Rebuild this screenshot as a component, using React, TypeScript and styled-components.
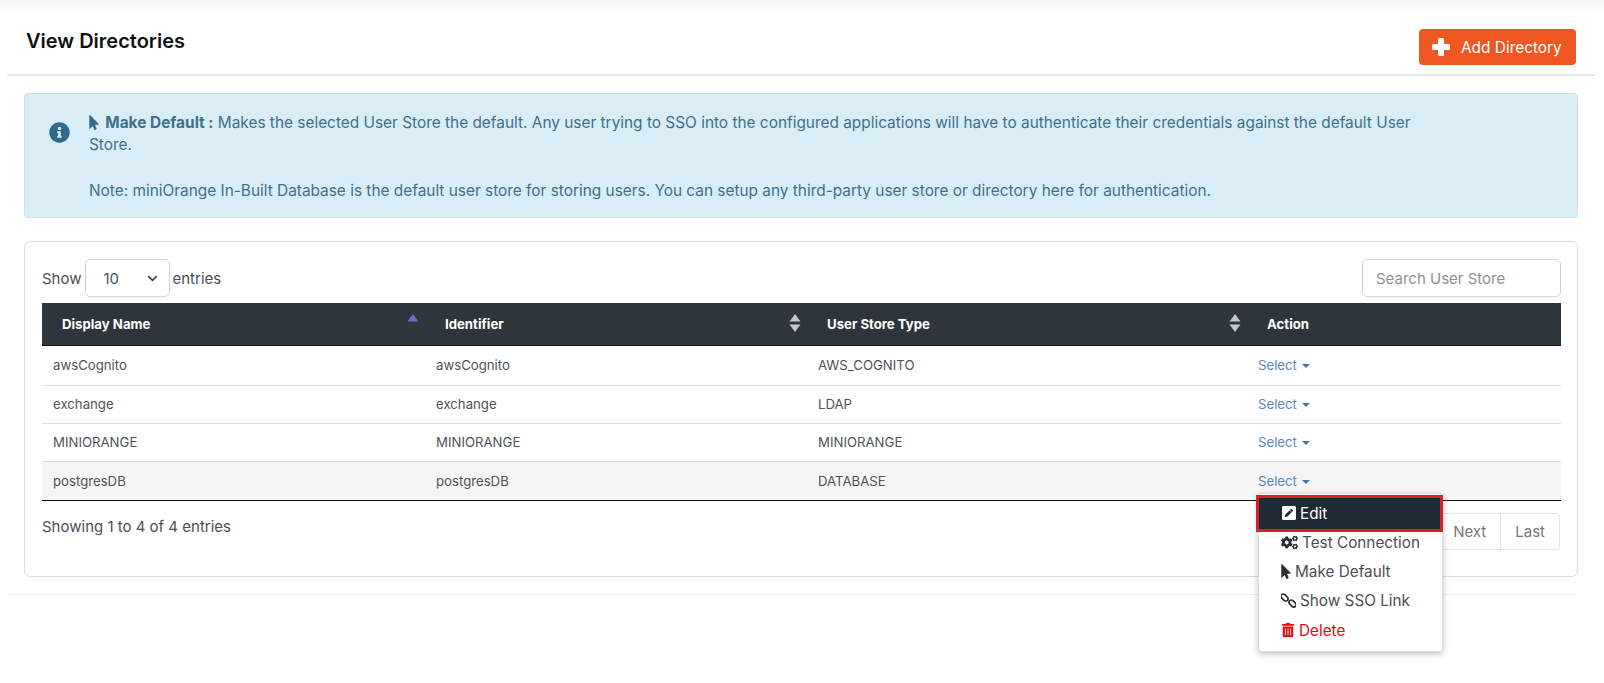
import styled, { createGlobalStyle } from "styled-components";
import { FaCogs, FaInfoCircle, FaMousePointer, FaPenSquare, FaTrashAlt } from "react-icons/fa";
import { ChevronDown } from "lucide-react";

const FONT = `Inter, "Liberation Sans", sans-serif`;

const rows = [
  { name: "awsCognito", type: "AWS_COGNITO", height: 40 },
  { name: "exchange", type: "LDAP", height: 38 },
  { name: "MINIORANGE", type: "MINIORANGE", height: 38 },
  { name: "postgresDB", type: "DATABASE", height: 39 },
];

const columns = [
  { label: "Display Name", width: 383, sort: "asc" },
  { label: "Identifier", width: 382, sort: "both" },
  { label: "User Store Type", width: 440, sort: "both" },
  { label: "Action", width: 314, sort: "none" },
];

const App = () => {
  return (
    <Page>
      <GlobalStyle />
      <Header>
        <Title>View Directories</Title>
        <AddButton>
          <svg width="18" height="18" viewBox="0 0 18 18">
            <path d="M6 1.5Q6 0 7.5 0h3Q12 0 12 1.5V6h4.5Q18 6 18 7.5v3q0 1.5-1.5 1.5H12v4.5q0 1.5-1.5 1.5h-3Q6 18 6 16.5V12H1.5Q0 12 0 10.5v-3Q0 6 1.5 6H6z" fill="#fff" />
          </svg>
          Add Directory
        </AddButton>
      </Header>

      <Content>
        <Alert>
          <AlertIcon>
            <FaInfoCircle size={21} />
          </AlertIcon>
          <AlertBody>
            <p>
              <AlertPointer size={15} /> <strong>Make Default :</strong> Makes the selected User
              Store the default. Any user trying to SSO into the configured applications will have
              to authenticate their credentials against the default User Store.
            </p>
            <p>
              Note: miniOrange In-Built Database is the default user store for storing users. You
              can setup any third-party user store or directory here for authentication.
            </p>
          </AlertBody>
        </Alert>

        <Card>
          <Toolbar>
            <ShowLabel>
              Show
              <SelectWrap>
                <PageSize defaultValue="10">
                  <option>10</option>
                  <option>25</option>
                  <option>50</option>
                </PageSize>
                <SelectChevron>
                  <ChevronDown size={15} strokeWidth={2.6} />
                </SelectChevron>
              </SelectWrap>
              entries
            </ShowLabel>
            <Search placeholder="Search User Store" />
          </Toolbar>

          <Table>
            <colgroup>
              {columns.map((c) => (
                <col key={c.label} style={{ width: c.width }} />
              ))}
            </colgroup>
            <thead>
              <tr>
                {columns.map((c) => (
                  <Th key={c.label}>
                    {c.label}
                    {c.sort !== "none" && (
                      <SortIcon>
                        <svg width="12" height="18" viewBox="0 0 12 18">
                          <path d="M6 0l5.5 7.5H.5z" fill={c.sort === "asc" ? "#7269c9" : "#c4c6c9"} />
                          {c.sort === "both" && <path d="M6 18L.5 10.5h11z" fill="#c4c6c9" />}
                        </svg>
                      </SortIcon>
                    )}
                  </Th>
                ))}
              </tr>
            </thead>
            <tbody>
              {rows.map((row, i) => (
                <Row key={row.name} $height={row.height} $last={i === rows.length - 1}>
                  <td>{row.name}</td>
                  <td>{row.name}</td>
                  <td>{row.type}</td>
                  <td>
                    <SelectLink>
                      Select <Caret />
                      {i === rows.length - 1 && (
                        <Menu>
                          <ActiveItem>
                            <FaPenSquare size={16} />
                            Edit
                          </ActiveItem>
                          <MenuItem>
                            <FaCogs size={17} />
                            Test Connection
                          </MenuItem>
                          <MenuItem>
                            <PointerIcon size={15} />
                            Make Default
                          </MenuItem>
                          <MenuItem>
                            <svg width="15" height="15" viewBox="0 0 15 15" fill="none" stroke="#2b2f33" strokeWidth="1.7">
                              <rect x="-0.5" y="2.2" width="8" height="4.6" rx="2.3" transform="rotate(45 3.5 4.5)" />
                              <rect x="7.5" y="8.2" width="8" height="4.6" rx="2.3" transform="rotate(45 11.5 10.5)" />
                            </svg>
                            Show SSO Link
                          </MenuItem>
                          <MenuItem $danger>
                            <FaTrashAlt size={14} />
                            Delete
                          </MenuItem>
                        </Menu>
                      )}
                    </SelectLink>
                  </td>
                </Row>
              ))}
            </tbody>
          </Table>

          <Footer>
            <span>Showing 1 to 4 of 4 entries</span>
            <Pagination>
              <PageButton>Next</PageButton>
              <PageButton>Last</PageButton>
            </Pagination>
          </Footer>
        </Card>
      </Content>

      <BottomRule />
    </Page>
  );
};

export default App;

const GlobalStyle = createGlobalStyle`
  html, body {
    margin: 0;
    background: #fff;
  }
  * {
    box-sizing: border-box;
  }
`;

const Page = styled.div`
  height: 683px;
  overflow: hidden;
  font-family: ${FONT};
  color: #4a4f54;
  background: linear-gradient(#f4f4f4 0, #fff 14px);
`;

const Header = styled.div`
  display: flex;
  justify-content: space-between;
  align-items: flex-start;
  height: 76px;
  margin: 0 9px 0 7px;
  padding: 29px 19px 0 19px;
  border-bottom: 2px solid #e8eaec;
`;

const Title = styled.h1`
  margin: 0;
  font-size: 20px;
  line-height: 24px;
  font-weight: 600;
  color: #111;
`;

const AddButton = styled.button`
  display: flex;
  align-items: center;
  gap: 11px;
  width: 157px;
  height: 36px;
  padding: 0 13px;
  border: 0;
  border-radius: 4px;
  background: #ee5722;
  color: #fff;
  font-family: ${FONT};
  font-size: 15.4px;
  white-space: nowrap;
`;

const Content = styled.div`
  padding: 17px 26px 0 24px;
`;

const Alert = styled.div`
  display: flex;
  height: 125px;
  padding: 18px 130px 0 0;
  border: 1px solid #c3e3f0;
  border-radius: 4px;
  background: #d9edf7;
  color: #41708a;
  font-size: 15.4px;
  line-height: 21.8px;

  p {
    margin: 0 0 24px;
  }
`;

const AlertIcon = styled.div`
  width: 64px;
  padding: 10px 0 0 24px;
  color: #2f6a8d;
  flex: none;
`;

const AlertBody = styled.div`
  svg {
    vertical-align: -2px;
    color: #2f6a8d;
  }
`;

const PointerIcon = styled(FaMousePointer)`
  width: 10px;
  flex: none;
`;

const AlertPointer = styled(PointerIcon)`
  margin-right: 2px;
`;

const Card = styled.div`
  height: 336px;
  margin-top: 23px;
  padding: 17px;
  border: 1px solid #ddd;
  border-radius: 6px;
`;

const Toolbar = styled.div`
  display: flex;
  justify-content: space-between;
  align-items: center;
  height: 38px;
  margin-bottom: 6px;
`;

const ShowLabel = styled.label`
  display: flex;
  align-items: center;
  gap: 3px;
  font-size: 15px;
`;

const SelectWrap = styled.div`
  position: relative;
  width: 85px;
`;

const PageSize = styled.select`
  width: 100%;
  height: 38px;
  padding: 0 18px;
  appearance: none;
  border: 1px solid #ced4da;
  border-radius: 5px;
  background: #fff;
  color: #4a4f54;
  font-family: ${FONT};
  font-size: 15px;
`;

const SelectChevron = styled.span`
  position: absolute;
  top: 12px;
  right: 10px;
  color: #444;
  pointer-events: none;
  line-height: 0;
`;

const Search = styled.input`
  width: 199px;
  height: 38px;
  margin-right: -1px;
  padding: 0 13px;
  border: 1px solid #ced4da;
  border-radius: 5px;
  font-family: ${FONT};
  font-size: 15px;

  &::placeholder {
    color: #8d9196;
  }
`;

const Table = styled.table`
  width: 1519px;
  table-layout: fixed;
  border-collapse: collapse;
`;

const Th = styled.th`
  position: relative;
  height: 42px;
  padding: 0 20px;
  background: #2f353d;
  border-bottom: 1px solid #111;
  color: #fff;
  font-size: 13.2px;
  font-weight: 700;
  text-align: left;
`;

const SortIcon = styled.span`
  position: absolute;
  top: 11px;
  right: 6px;
  line-height: 0;
`;

const Row = styled.tr<{ $height: number; $last?: boolean }>`
  height: ${(p) => p.$height}px;
  background: ${(p) => (p.$last ? "#f5f5f5" : "#fff")};
  border-bottom: 1px solid ${(p) => (p.$last ? "#111" : "#ddd")};

  td {
    padding: 0 11px;
    font-size: 13.2px;
    color: #4f5357;
  }
`;

const SelectLink = styled.span`
  position: relative;
  display: inline-block;
  color: #5a86b8;
  white-space: nowrap;
`;

const Caret = styled.span`
  display: inline-block;
  margin-left: 1px;
  vertical-align: 2px;
  border-top: 4px solid #3c78b4;
  border-left: 4px solid transparent;
  border-right: 4px solid transparent;
`;

const Menu = styled.div`
  position: absolute;
  top: 20px;
  left: 0;
  z-index: 5;
  width: 185px;
  height: 159px;
  padding-top: 5px;
  background: #fff;
  border: 1px solid #ddd;
  border-radius: 4px;
  box-shadow: 0 2px 6px rgba(0, 0, 0, 0.25);
`;

const MenuItem = styled.div<{ $danger?: boolean }>`
  display: flex;
  align-items: center;
  gap: 4px;
  height: 29.3px;
  padding-left: 22px;
  color: ${(p) => (p.$danger ? "#e8090f" : "#4a4f54")};
  font-size: 15.3px;

  svg {
    flex: none;
    color: ${(p) => (p.$danger ? "#e8090f" : "#2b2f33")};
  }
`;

const ActiveItem = styled.div`
  position: relative;
  display: flex;
  align-items: center;
  gap: 3px;
  height: 37px;
  margin: -4px -1px -4px -3px;
  padding-left: 22px;
  background: #1f2a35;
  border: 3px solid #d8202c;
  color: #fff;
  font-size: 15.3px;
`;

const Footer = styled.div`
  display: flex;
  justify-content: space-between;
  align-items: flex-start;
  padding-top: 12px;
  font-size: 15px;

  > span {
    padding-top: 4px;
  }
`;

const Pagination = styled.div`
  display: flex;
  height: 37px;
  border: 1px solid #e2e4e6;
  border-radius: 4px;
`;

const PageButton = styled.span`
  display: flex;
  align-items: center;
  padding: 0 14px;
  color: #777;
  font-size: 15px;

  & + & {
    border-left: 1px solid #e2e4e6;
  }
`;

const BottomRule = styled.div`
  height: 1px;
  margin: 17px 29px 0 9px;
  background: #eeeeee;
`;
